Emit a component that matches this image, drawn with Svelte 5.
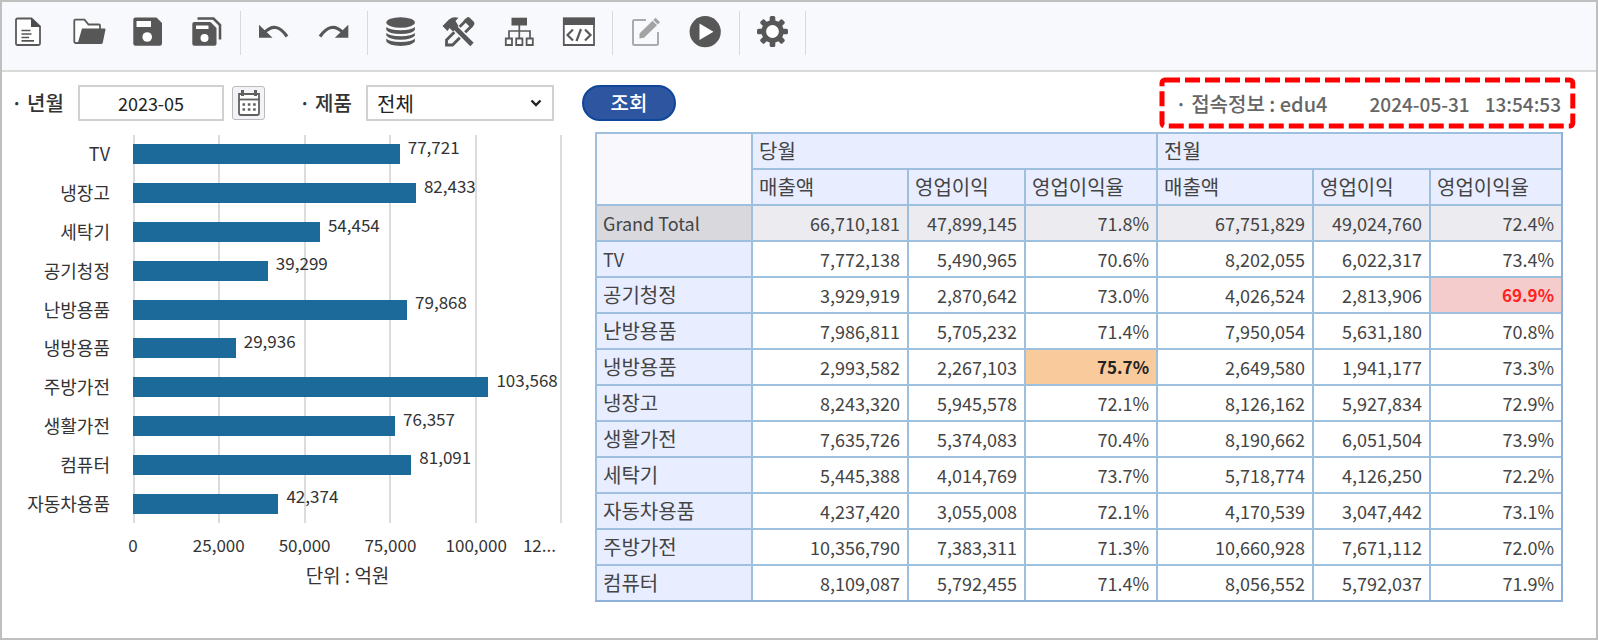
<script>
  let month = "2023-05";
  let product = "전체";
  const max = 125000;

  const sales = [
    { name: "TV", value: 77721 },
    { name: "냉장고", value: 82433 },
    { name: "세탁기", value: 54454 },
    { name: "공기청정", value: 39299 },
    { name: "난방용품", value: 79868 },
    { name: "냉방용품", value: 29936 },
    { name: "주방가전", value: 103568 },
    { name: "생활가전", value: 76357 },
    { name: "컴퓨터", value: 81091 },
    { name: "자동차용품", value: 42374 },
  ];

  const ticks = ["0", "25,000", "50,000", "75,000", "100,000", "12..."];

  const rows = [
    ["Grand Total", "66,710,181", "47,899,145", "71.8%", "67,751,829", "49,024,760", "72.4%"],
    ["TV", "7,772,138", "5,490,965", "70.6%", "8,202,055", "6,022,317", "73.4%"],
    ["공기청정", "3,929,919", "2,870,642", "73.0%", "4,026,524", "2,813,906", "69.9%"],
    ["난방용품", "7,986,811", "5,705,232", "71.4%", "7,950,054", "5,631,180", "70.8%"],
    ["냉방용품", "2,993,582", "2,267,103", "75.7%", "2,649,580", "1,941,177", "73.3%"],
    ["냉장고", "8,243,320", "5,945,578", "72.1%", "8,126,162", "5,927,834", "72.9%"],
    ["생활가전", "7,635,726", "5,374,083", "70.4%", "8,190,662", "6,051,504", "73.9%"],
    ["세탁기", "5,445,388", "4,014,769", "73.7%", "5,718,774", "4,126,250", "72.2%"],
    ["자동차용품", "4,237,420", "3,055,008", "72.1%", "4,170,539", "3,047,442", "73.1%"],
    ["주방가전", "10,356,790", "7,383,311", "71.3%", "10,660,928", "7,671,112", "72.0%"],
    ["컴퓨터", "8,109,087", "5,792,455", "71.4%", "8,056,552", "5,792,037", "71.9%"],
  ];

  const teeth = [0, 45, 90, 135, 180, 225, 270, 315];

  // 이익률 75% 이상은 high, 70% 미만은 low
  function mark(cell) {
    if (!cell.endsWith("%")) return "";
    const rate = parseFloat(cell);
    if (rate >= 75) return "high";
    if (rate < 70) return "low";
    return "";
  }
</script>

<div class="page">
  <header class="toolbar">
    <div class="group">
      <button type="button" aria-label="새로 만들기">
        <svg viewBox="0 0 33 32">
          <path d="M4.500 2.500H18.500L27 10.500V27.500Q27 29 25.500 29H4.500Q3 29 3 27.500V4Q3 2.500 4.500 2.500Z" fill="#fff" stroke="#5a5a5a" stroke-width="1.800" />
          <path d="M18 2L27.500 11H18Z" fill="#4c4c4c" />
          <path d="M8.500 14.500H17.500M8.500 18H18.500M8.500 21.500H16M8.500 24.800H21" stroke="#555" stroke-width="1.700" />
        </svg>
      </button>
      <button type="button" aria-label="열기">
        <svg viewBox="0 0 33 32">
          <path d="M6 27H3.500Q2.300 27 2.300 25.800V4.600Q2.300 3.700 3.300 3.700H12.500L16.500 8.500H27Q28 8.500 28 9.500V13" fill="#fff" stroke="#5a5a5a" stroke-width="1.800" />
          <path d="M10 12.500H32.500Q33.700 12.500 33.500 13.600L30.800 26.500Q30.500 28 29 28H5.500Z" fill="#575757" />
        </svg>
      </button>
      <button type="button" aria-label="저장">
        <svg viewBox="0 0 33 32">
          <path d="M4.500 1.500H25.500L31 7V27.500Q31 29.700 28.800 29.700H4.500Q2.300 29.700 2.300 27.500V3.700Q2.300 1.500 4.500 1.500Z" fill="#575757" />
          <path d="M5.500 5H20V11H5.500Z" fill="#fff" />
          <circle cx="16.200" cy="21" r="4.800" fill="#fff" />
        </svg>
      </button>
      <button type="button" aria-label="모두 저장">
        <svg viewBox="0 0 33 32">
          <path d="M7.500 2.500H23.500L30 9V23.500" fill="none" stroke="#575757" stroke-width="2.600" />
          <path d="M4.300 6H20.500L26.500 12V27.700Q26.500 29.700 24.500 29.700H4.300Q2.300 29.700 2.300 27.700V8Q2.300 6 4.300 6Z" fill="#575757" />
          <path d="M6 9.500H18.500V13H6Z" fill="#fff" />
          <circle cx="14.500" cy="22" r="4" fill="#fff" />
        </svg>
      </button>
    </div>
    <div class="group">
      <button type="button" aria-label="실행 취소">
        <svg viewBox="0 0 33 32">
          <path d="M1 8.700V21.700H14.500Z" fill="#575757" />
          <path d="M6.500 16.500Q18 4.500 29 20.500" fill="none" stroke="#575757" stroke-width="3.200" />
        </svg>
      </button>
      <button type="button" aria-label="다시 실행">
        <svg viewBox="0 0 33 32">
          <path d="M31.300 8.700V21.700H17.800Z" fill="#575757" />
          <path d="M25.800 16.500Q14.300 4.500 3 20.500" fill="none" stroke="#575757" stroke-width="3.200" />
        </svg>
      </button>
    </div>
    <div class="group">
      <button type="button" aria-label="데이터 원본">
        <svg viewBox="0 0 33 32" fill="#575757">
          <ellipse cx="15.600" cy="6.500" rx="14.300" ry="5.200" />
          <path d="M1.300 11Q4 14 15.600 14.300Q27.200 14 29.900 11V14Q27 18 15.600 18Q4 18 1.300 14Z" />
          <path d="M1.300 17Q4 20 15.600 20.300Q27.200 20 29.900 17V19.500Q27 23.500 15.600 23.800Q4 23.500 1.300 19.500Z" />
          <path d="M1.300 22.500Q4 25.700 15.600 26Q27.200 25.700 29.900 22.500V25.500Q27 29.700 15.600 30Q4 29.700 1.300 25.500Z" />
        </svg>
      </button>
      <button type="button" aria-label="도구">
        <svg viewBox="0 0 33 32">
          <path d="M2.500 24L22 4.500L27.500 10L8.500 29H2.500Z" fill="#f8f9fc" stroke="#575757" stroke-width="2.800" />
          <path d="M19.500 4.500L23 1.500Q24.500 0.500 26 2L30 6Q31 7.500 30 9L27 12Z" fill="#575757" />
          <path d="M10.500 11L27.500 28" stroke="#f8f9fc" stroke-width="7.500" />
          <path d="M9 9.500L28 28.500" stroke="#575757" stroke-width="4.600" />
          <path d="M-1.500 10L5 3.500Q9 0 14.500 1.800L11.500 5L14.500 10L9 15.500L5.500 12L3.500 15Z" fill="#575757" />
        </svg>
      </button>
      <button type="button" aria-label="구조">
        <svg viewBox="0 0 33 32">
          <path d="M8.500 1.700H24V9.500H8.500Z" fill="#575757" />
          <path d="M16.300 9V22M6 22V15H27V22" fill="none" stroke="#5a5a5a" stroke-width="1.700" />
          <path d="M2.800 22.500H9V29H2.800ZM13.200 22.500H19.400V29H13.200ZM23.600 22.500H29.800V29H23.600Z" fill="#fff" stroke="#5a5a5a" stroke-width="1.800" />
        </svg>
      </button>
      <button type="button" aria-label="소스 코드">
        <svg viewBox="0 0 33 32">
          <path d="M1.800 2.500H32V29H1.800Z" fill="#fff" stroke="#5a5a5a" stroke-width="1.800" />
          <path d="M1 1.700H32.800V9H1Z" fill="#575757" />
          <path d="M11 13.500L5.500 19L11 24.500M23 13.500L28.500 19L23 24.500M19 13L14.500 25" fill="none" stroke="#5a5a5a" stroke-width="2.200" />
        </svg>
      </button>
    </div>
    <div class="group">
      <button type="button" aria-label="편집">
        <svg viewBox="0 0 33 32">
          <path d="M16 4H4.500Q3 4 3 5.500V27.500Q3 29 4.500 29H26.500Q28 29 28 27.500V16" fill="none" stroke="#ababab" stroke-width="2" />
          <path d="M9.500 17.500L22.500 4.800L27 9.300L14 21.800L9.500 22.500Z" fill="#a3a3a3" />
          <path d="M23.300 4L25.500 1.800L30 6.200L27.800 8.500Z" fill="#a3a3a3" />
        </svg>
      </button>
      <button type="button" aria-label="실행">
        <svg viewBox="0 0 33 32">
          <circle cx="16.200" cy="15.700" r="15.600" fill="#575757" />
          <path d="M10.500 7.500L24.500 15.700L10.500 24Z" fill="#fff" />
        </svg>
      </button>
    </div>
    <div class="group">
      <button type="button" aria-label="설정">
        <svg viewBox="0 0 33 32">
          <circle cx="15.500" cy="15.500" r="8.800" fill="#fff" stroke="#575757" stroke-width="4.800" />
          {#each teeth as angle}
            <rect x="12.700" y="0" width="5.600" height="6" rx="1.600" fill="#575757" transform="rotate({angle} 15.500 15.500)" />
          {/each}
        </svg>
      </button>
    </div>
  </header>

  <form class="filter" on:submit|preventDefault>
    <label for="month">· 년월</label>
    <input id="month" type="text" bind:value={month} />
    <button class="calendar" type="button" aria-label="달력">
      <svg viewBox="0 0 24 28" width="24" height="28">
        <path d="M2 5H22V24Q22 26 20 26H4Q2 26 2 24Z" fill="#fff" stroke="#606060" stroke-width="1.800" />
        <path d="M5.500 1V7M18.500 1V7" stroke="#606060" stroke-width="3" />
        <path d="M2 10.500H22" stroke="#606060" stroke-width="1.800" />
        <path d="M5.500 15.500H19M5.500 20.500H19" stroke="#606060" stroke-width="2.600" stroke-dasharray="2.600 2.700" />
      </svg>
    </button>
    <label class="second" for="product">· 제품</label>
    <div class="select">
      <select id="product" bind:value={product}>
        <option>전체</option>
        {#each sales as item}
          <option>{item.name}</option>
        {/each}
      </select>
      <svg viewBox="0 0 12 8" width="12" height="8">
        <path d="M1.500 1.500L6 6L10.500 1.500" fill="none" stroke="#222" stroke-width="2.400" />
      </svg>
    </div>
    <button class="search" type="submit">조회</button>

    <div class="info">
      <svg class="dash"><rect width="100%" height="100%" rx="3" /></svg>
      <span class="user">· 접속정보 : edu4</span>
      <span class="date">2024-05-31</span>
      <span>13:54:53</span>
    </div>
  </form>

  <main>
    <section class="chart">
      <ul class="names">
        {#each sales as item}
          <li>{item.name}</li>
        {/each}
      </ul>
      <div class="plot">
        <div class="lines">
          {#each ticks as tick}
            <i></i>
          {/each}
        </div>
        <div class="bars">
          {#each sales as item}
            <div class="row">
              <div class="bar" style="width: {(item.value / max) * 100}%"></div>
              <span>{item.value.toLocaleString("en-US")}</span>
            </div>
          {/each}
        </div>
      </div>
      <ul class="ticks">
        {#each ticks as tick}
          <li>{tick}</li>
        {/each}
      </ul>
      <p class="unit">단위 : 억원</p>
    </section>

    <table>
      <colgroup>
        <col class="w-name" />
        <col class="w-sales" />
        <col class="w-profit" />
        <col class="w-rate" />
        <col class="w-sales" />
        <col class="w-profit" />
        <col class="w-rate" />
      </colgroup>
      <thead>
        <tr>
          <td class="corner" rowspan="2"></td>
          <th colspan="3">당월</th>
          <th colspan="3">전월</th>
        </tr>
        <tr>
          <th>매출액</th>
          <th>영업이익</th>
          <th>영업이익율</th>
          <th>매출액</th>
          <th>영업이익</th>
          <th>영업이익율</th>
        </tr>
      </thead>
      <tbody>
        {#each rows as row, i}
          <tr class:total={i === 0}>
            <th class:latin={i < 2}>{row[0]}</th>
            {#each row.slice(1) as cell}
              <td class={mark(cell)}>{cell}</td>
            {/each}
          </tr>
        {/each}
      </tbody>
    </table>
  </main>
</div>

<style>
  :global(body) {
    margin: 0;
  }
  .page {
    box-sizing: border-box;
    min-height: 100vh;
    border: 2px solid #bfbfbf;
    background: #fff;
    color: #333;
    font-family: "Noto Sans CJK KR", "Noto Sans", sans-serif;
    font-size: 18px;
  }
  button,
  input,
  select {
    box-sizing: border-box;
    margin: 0;
    font-family: inherit;
    font-size: 18px;
  }
  ul,
  p {
    margin: 0;
    padding: 0;
    list-style: none;
  }

  .toolbar {
    display: flex;
    padding: 9px 0 15px;
    border-bottom: 2px solid #d9d9d9;
    background: #f8f9fc;
  }
  .group {
    display: flex;
    padding: 0 4px;
    border-right: 1px solid #d9d9dc;
  }
  .group:first-child {
    padding-left: 0;
    margin-left: -2px;
  }
  .group:last-child {
    padding-right: 2px;
  }
  .group button {
    width: 59px;
    height: 44px;
    padding: 0 0 2px;
    border: 0;
    background: none;
  }
  .group svg {
    display: block;
    width: 33px;
    height: 32px;
    margin: 0 auto;
    overflow: visible;
  }

  .filter {
    display: flex;
    align-items: center;
    padding: 5px 20px 3px 9px;
  }
  label {
    width: 67px;
    font-size: 20px;
    font-weight: 500;
    line-height: 36px;
    white-space: pre;
  }
  .second {
    margin-left: 34px;
  }
  input,
  select {
    height: 36px;
    border: 2px solid #d0d0d0;
    border-radius: 0;
    background: #fff;
    color: #222;
  }
  input {
    width: 146px;
    text-align: center;
  }
  .calendar {
    display: flex;
    align-items: center;
    justify-content: center;
    width: 33px;
    height: 34px;
    margin-left: 8px;
    padding: 0;
    border: 1px solid #bbb;
    border-radius: 3px;
    background: #f3f3f7;
  }
  .select {
    display: grid;
    align-items: center;
  }
  .select > * {
    grid-area: 1 / 1;
  }
  .select svg {
    justify-self: end;
    margin-right: 12px;
    pointer-events: none;
  }
  select {
    width: 188px;
    padding: 0 9px;
    appearance: none;
    font-size: 20px;
  }
  .search {
    width: 94px;
    height: 36px;
    margin-left: 28px;
    padding: 0;
    border: 2px solid #10469a;
    border-radius: 18px;
    background: #2e559f;
    color: #fff;
    font-size: 20px;
    font-weight: 500;
    line-height: 30px;
  }
  .info {
    position: relative;
    display: flex;
    align-items: center;
    gap: 15px;
    box-sizing: border-box;
    height: 52px;
    margin-left: auto;
    padding: 0 15px 0 16px;
    color: #666;
    font-size: 19px;
    font-weight: 500;
    white-space: nowrap;
  }
  .user {
    font-size: 20px;
  }
  .date {
    margin-left: 27px;
  }
  .dash {
    position: absolute;
    inset: 3px;
    width: calc(100% - 6px);
    height: calc(100% - 6px);
    overflow: visible;
    fill: none;
    stroke: #f00;
    stroke-width: 5px;
    stroke-dasharray: 15 5;
  }

  main {
    display: grid;
    grid-template-columns: minmax(0, 560fr) minmax(0, 968fr);
    gap: 33px;
    align-items: start;
    padding-right: 33px;
  }

  .chart {
    display: grid;
    grid-template-columns: 108px minmax(0, 1fr);
    column-gap: 23px;
    padding-top: 3px;
  }
  .names,
  .bars {
    display: grid;
    grid-template-rows: repeat(10, 1fr);
    height: 388px;
  }
  .names li {
    align-self: center;
    padding-bottom: 2px;
    font-size: 18px;
    line-height: 26px;
    text-align: right;
  }
  .plot {
    display: grid;
  }
  .lines,
  .bars {
    grid-area: 1 / 1;
  }
  .lines {
    display: flex;
    justify-content: space-between;
  }
  .lines i {
    width: 2px;
    background: #dcdcdc;
  }
  .row {
    display: flex;
    align-items: center;
  }
  .bar {
    flex-shrink: 0;
    height: 20px;
    background: #1b6a99;
  }
  .row span {
    align-self: flex-start;
    margin-left: 8px;
    font-size: 17px;
    line-height: 24px;
  }
  .ticks {
    grid-column: 2;
    display: flex;
    justify-content: space-between;
    padding-top: 9px;
    font-size: 17px;
    line-height: 26px;
  }
  .ticks li {
    display: flex;
    justify-content: center;
    width: 0;
  }
  .ticks li:last-child {
    justify-content: flex-end;
    margin-left: -6px;
    padding-right: 6px;
  }
  .unit {
    grid-column: 2;
    padding-top: 4px;
    font-size: 19px;
    line-height: 26px;
    text-align: center;
  }

  table {
    width: 100%;
    table-layout: fixed;
    border-collapse: separate;
    border-spacing: 0;
    border: solid #8eb1da;
    border-width: 0 2px 2px 0;
    color: #444;
  }
  .w-name,
  .w-sales {
    width: 156px;
  }
  .w-profit {
    width: 117px;
  }
  .w-rate {
    width: 132px;
  }
  th,
  td {
    box-sizing: border-box;
    height: 36px;
    padding: 0 7px 0 6px;
    border: solid #9fbfdf;
    border-width: 2px 0 0 2px;
    line-height: 28px;
    text-align: right;
    white-space: nowrap;
  }
  th {
    background: #e8edff;
    font-size: 20px;
    font-weight: 400;
    text-align: left;
  }
  .corner {
    background: #f9f9fd;
  }
  .latin {
    font-size: 18px;
  }
  .total th {
    background: #d9d9dd;
  }
  .total td {
    background: #ecebf0;
  }
  .high {
    background: #f9cb9c;
    color: #222;
    font-size: 17px;
    font-weight: 700;
  }
  .low {
    background: #f4cccc;
    color: #f22;
    font-size: 17px;
    font-weight: 700;
  }
</style>
